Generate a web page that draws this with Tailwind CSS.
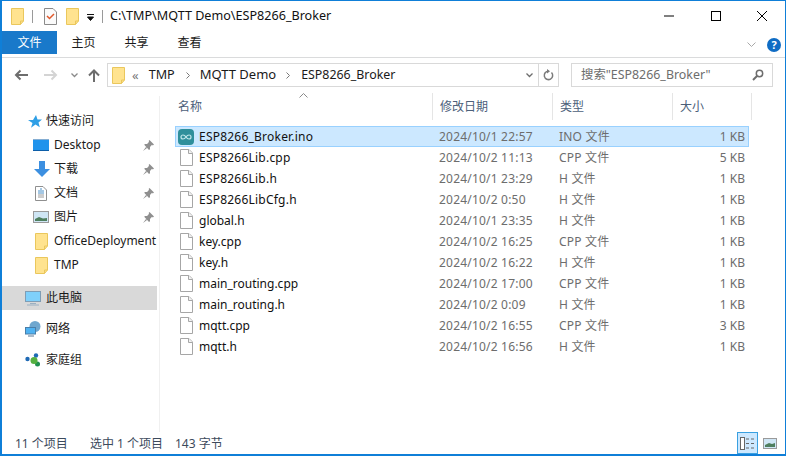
<!DOCTYPE html>
<html lang="en">
<head>
<meta charset="UTF-8">
<title>ESP8266_Broker</title>
<script src="https://cdn.jsdelivr.net/npm/@tailwindcss/browser@4"></script>
</head>
<body class="bg-white overflow-hidden">
<svg width="0" height="0" class="absolute">
  <symbol id="folder" viewBox="0 0 13 17"><path d="M.5.5h12v12.5l-3 3.5H.5z" fill="#ffe38f" stroke="#eac75c"/><path d="M9.5 16.5V13h3" fill="none" stroke="#eac75c"/></symbol>
  <symbol id="file" viewBox="0 0 13 17"><path d="M.5.5h8.5l3.5 3.5v12.5H.5z" fill="#fff" stroke="#a6a6a6"/><path d="M8.5.5v4h4" fill="#f2f2f2" stroke="#a6a6a6"/></symbol>
  <symbol id="pin" viewBox="0 0 11 11"><path d="M6.5 0 11 4.5 9.8 5.4 9 4.8 7 7 7 9.2 6 10 1.2 4.8 2 4l2.100 0 2-2.200L5.600 1zM3 7l-3 4 4-3z" fill="#8f8f8f"/></symbol>
</svg>
<div class="w-[786px] h-[456px] flex flex-col border border-[#0f7fd8] border-l-2 border-b-2 font-['Noto_Sans','Noto_Sans_CJK_SC',sans-serif] text-[12px] text-[#1a1a1a]">

  <!-- title bar -->
  <div class="h-[30px] shrink-0 flex items-center pl-[9px]">
    <svg width="13" height="17"><use href="#folder"/></svg>
    <div class="w-px h-[13px] bg-[#9a9a9a] ml-[8px]"></div>
    <svg width="13" height="17" viewBox="0 0 13 17" class="ml-[11px]"><path d="M.5.500h8.500l3.500 3.500v12.500H.5z" fill="#fafafa" stroke="#8a8a8a"/><path d="M3 8l2.500 2.500L10 6" fill="none" stroke="#e0572a" stroke-width="1.500"/></svg>
    <svg width="13" height="17" class="ml-[9px]"><use href="#folder"/></svg>
    <svg width="7" height="7" viewBox="0 0 7 7" class="ml-[8px] mt-[2px]"><path d="M0 .5h7M.5 3h6L3.500 6.500z" stroke="#111" stroke-width="1" fill="#111"/></svg>
    <div class="w-px h-[13px] bg-[#9a9a9a] ml-[8px]"></div>
    <span class="ml-[7px] text-[#111] text-[12.6px]">C:\TMP\MQTT Demo\ESP8266_Broker</span>
    <div class="ml-auto flex items-center">
      <svg width="10" height="2" class="mr-[37px]"><path d="M0 1h10" stroke="#000"/></svg>
      <svg width="10" height="10" class="mr-[36px]"><rect x=".5" y=".5" width="9" height="9" fill="none" stroke="#000"/></svg>
      <svg width="10" height="10" class="mr-[18px]"><path d="M0 0l10 10M10 0L0 10" stroke="#000" stroke-width="1"/></svg>
    </div>
  </div>

  <!-- ribbon tabs -->
  <div class="h-[27px] shrink-0 flex border-b border-[#dadbdc]">
    <div class="w-[55px] h-[23px] pt-[1px] bg-[#1979ca] text-white flex items-center justify-center">文件</div>
    <div class="w-[53px] h-[23px] pt-[1px] flex items-center justify-center">主页</div>
    <div class="w-[53px] h-[23px] pt-[1px] flex items-center justify-center">共享</div>
    <div class="w-[53px] h-[23px] pt-[1px] flex items-center justify-center">查看</div>
    <div class="ml-auto flex items-start pt-[7px] pr-[4px]">
      <svg width="9" height="5" viewBox="0 0 9 5" class="mt-[4px] mr-[11px]"><path d="M.5.500 4.500 4.500 8.500.500" fill="none" stroke="#a8a8a8"/></svg>
      <div class="w-[14px] h-[14px] rounded-full bg-[#0f6cc4] text-white text-[11px] leading-[14px] font-bold text-center">?</div>
    </div>
  </div>

  <!-- address row -->
  <div class="h-[38px] shrink-0 flex items-center pl-[12px] pb-[4px]">
    <svg width="14" height="12" viewBox="0 0 14 12"><path d="M14 6H2M6.500 1.500 2 6l4.500 4.500" fill="none" stroke="#6d6d6d" stroke-width="2"/></svg>
    <svg width="14" height="12" viewBox="0 0 14 12" class="ml-[16px]"><path d="M0 6h12M7.500 1.500 12 6l-4.500 4.500" fill="none" stroke="#d4d4d4" stroke-width="2"/></svg>
    <svg width="7" height="5" viewBox="0 0 7 5" class="ml-[13px]"><path d="M.5.500 3.500 3.500 6.500.500" fill="none" stroke="#8a8a8a" stroke-width="1.300"/></svg>
    <svg width="12" height="13" viewBox="0 0 12 13" class="ml-[10px]"><path d="M6 13V2M1 6.500 6 1.500l5 5" fill="none" stroke="#6d6d6d" stroke-width="2"/></svg>
    <div class="ml-[7px] w-[452px] h-[24px] border border-[#d9d9d9] flex items-center pl-[4px]">
      <svg width="13" height="17"><use href="#folder"/></svg>
      <span class="ml-[7px] text-[#777] text-[13px] leading-none">«</span>
      <span class="ml-[10px] text-[12.6px]">TMP</span>
      <svg width="4" height="7" viewBox="0 0 4 7" class="ml-[11px]"><path d="M.5.500 3.500 3.500.5 6.500" fill="none" stroke="#777"/></svg>
      <span class="ml-[10px] text-[13px]">MQTT Demo</span>
      <svg width="4" height="7" viewBox="0 0 4 7" class="ml-[10px]"><path d="M.5.500 3.500 3.500.5 6.500" fill="none" stroke="#777"/></svg>
      <span class="ml-[11px] text-[12.4px]">ESP8266_Broker</span>
      <div class="ml-auto w-[18px] h-full flex items-center justify-center">
        <svg width="7" height="5" viewBox="0 0 7 5"><path d="M.5.500 3.500 3.500 6.500.500" fill="none" stroke="#6d6d6d" stroke-width="1.300"/></svg>
      </div>
      <div class="w-[20px] h-full border-l border-[#d9d9d9] flex items-center justify-center">
        <svg width="11" height="12" viewBox="0 0 11 12"><path d="M8.500 3.500A4.200 4.200 0 1 1 5.500 2.200" fill="none" stroke="#7a7a7a" stroke-width="1.500"/><path d="M4 0v4.500l3-2.200z" fill="#7a7a7a"/></svg>
      </div>
    </div>
    <div class="ml-[12px] w-[202px] h-[24px] border border-[#d9d9d9] flex items-center pl-[9px] pr-[8px] text-[#6d6d6d]">
      <span class="text-[12.4px]">搜索"ESP8266_Broker"</span>
      <svg width="12" height="12" viewBox="0 0 12 12" class="ml-auto"><circle cx="7.500" cy="4.500" r="3.200" fill="none" stroke="#6d6d6d" stroke-width="1.500"/><path d="M5 7 1 11" stroke="#6d6d6d" stroke-width="2"/></svg>
    </div>
  </div>

  <!-- main area -->
  <div class="flex-1 flex min-h-0">
    <!-- nav pane -->
    <div class="w-[158px] shrink-0 border-r border-[#f0f0f0] pt-[13px]">
      <div class="h-[24px] flex items-center pl-[26px]">
        <svg width="14" height="13" viewBox="0 0 14 13"><path d="M8 0l1.500 4.500H14L10.500 7.500l1.300 4.800L7.500 9.500 3 12.800 4.500 8 0 5h5z" fill="#2f9fe6"/></svg>
        <span class="ml-[4px]">快速访问</span>
      </div>
      <div class="h-[24px] flex items-center pl-[31px] pr-[3px]">
        <svg width="17" height="13" viewBox="0 0 17 13"><rect width="16" height="11" y="1" fill="#1f93ec"/><path d="M0 11.500h16" stroke="#0d5ea8"/><path d="M0 0h16" stroke="#0d5ea8"/></svg>
        <span class="ml-[4px]">Desktop</span>
        <svg width="11" height="11" class="ml-auto mr-[2px]"><use href="#pin"/></svg>
      </div>
      <div class="h-[24px] flex items-center pl-[32px] pr-[3px]">
        <svg width="16" height="16" viewBox="0 0 16 16"><path d="M5 0h6v8h5l-8 8-8-8h5z" fill="#3c8fe0"/></svg>
        <span class="ml-[4px]">下载</span>
        <svg width="11" height="11" class="ml-auto mr-[2px]"><use href="#pin"/></svg>
      </div>
      <div class="h-[24px] flex items-center pl-[33px] pr-[3px]">
        <svg width="12" height="15" viewBox="0 0 12 15"><path d="M.5.500h7.500l3.500 3.500v10.500H.5z" fill="#fff" stroke="#8f8f8f"/><path d="M5 3h2M3 5h6M3 7h6" stroke="#4a90c8"/><path d="M3 9h6M3 11h6" stroke="#9a9a9a"/></svg>
        <span class="ml-[7px]">文档</span>
        <svg width="11" height="11" class="ml-auto mr-[2px]"><use href="#pin"/></svg>
      </div>
      <div class="h-[24px] flex items-center pl-[31px] pr-[3px]">
        <svg width="16" height="12" viewBox="0 0 16 12"><rect x=".5" y=".5" width="15" height="11" fill="#cfe6f5" stroke="#9a9a9a"/><path d="M2 8 6 6l4 1.500 4-.5v3H2z" fill="#4f7f5f"/></svg>
        <span class="ml-[5px]">图片</span>
        <svg width="11" height="11" class="ml-auto mr-[2px]"><use href="#pin"/></svg>
      </div>
      <div class="h-[24px] flex items-center pl-[33px] whitespace-nowrap overflow-hidden">
        <svg width="13" height="17" class="shrink-0"><use href="#folder"/></svg>
        <span class="ml-[6px]">OfficeDeployment</span>
      </div>
      <div class="h-[24px] flex items-center pl-[33px]">
        <svg width="13" height="17"><use href="#folder"/></svg>
        <span class="ml-[6px]">TMP</span>
      </div>
      <div class="h-[24px] flex items-center pl-[23px] mt-[9px] bg-[#d9d9d9] w-[155px]">
        <svg width="17" height="15" viewBox="0 0 17 15"><rect x=".5" y=".5" width="15" height="10" fill="#7fd0fb" stroke="#7f9db5"/><path d="M5 12.500h6M2 14h12" stroke="#9ab0c2"/></svg>
        <span class="ml-[4px]">此电脑</span>
      </div>
      <div class="h-[24px] flex items-center pl-[23px] mt-[7px]">
        <svg width="16" height="16" viewBox="0 0 16 16"><circle cx="10" cy="5.500" r="5.500" fill="#6fa7cf"/><rect x=".5" y="6.500" width="10" height="6.500" fill="#4fb2f2" stroke="#4a7ea8"/><path d="M3 15h6" stroke="#8fa5b8" stroke-width="1.500"/></svg>
        <span class="ml-[5px]">网络</span>
      </div>
      <div class="h-[24px] flex items-center pl-[23px] mt-[7px]">
        <svg width="16" height="14" viewBox="0 0 16 14"><circle cx="2.500" cy="6" r="2.200" fill="#1f6ab5"/><circle cx="11" cy="2.500" r="2.200" fill="#1f6ab5"/><circle cx="12.500" cy="11" r="2.500" fill="#1f8f4f"/><circle cx="9" cy="7.500" r="3.500" fill="#55b040"/></svg>
        <span class="ml-[5px]">家庭组</span>
      </div>
    </div>

    <!-- file list -->
    <div class="flex-1 flex flex-col min-w-0 pl-[15px]">
      <div class="h-[27px] -mt-[3px] flex shrink-0 text-[#4c607a] relative">
        <svg width="9" height="5" viewBox="0 0 9 5" class="absolute left-[124px] top-[0px]"><path d="M.5 4.500 4.500.500l4 4" fill="none" stroke="#8a8a8a"/></svg>
        <div class="w-[257px] pl-[3px] flex items-center">名称</div>
        <div class="w-[120px] pl-[7px] flex items-center border-l border-[#e5e5e5]">修改日期</div>
        <div class="w-[120px] pl-[7px] flex items-center border-l border-[#e5e5e5]">类型</div>
        <div class="w-[80px] pl-[7px] flex items-center border-x border-[#e5e5e5]">大小</div>
      </div>
      <div class="mt-[6px] w-[574px] text-[#6d6d6d]">
        <div class="h-[21px] flex items-center bg-[#cce8ff] border border-[#99d1ff]">
          <svg width="16" height="16" viewBox="0 0 16 16" class="ml-[2px] w-[16px]"><rect width="16" height="16" rx="4" fill="#2f8f9b"/><path d="M8 8c-1-1.500-2-2-3-2a2 2 0 0 0 0 4c1 0 2-.5 3-2s2-2 3-2a2 2 0 0 1 0 4c-1 0-2-.5-3-2" fill="none" stroke="#bfe6ea" stroke-width="1.200"/></svg>
          <span class="ml-[5px] w-[240px] text-[#111] tracking-[0.22px]">ESP8266_Broker.ino</span>
          <span class="w-[120px] tracking-[0.2px]">2024/10/1 22:57</span>
          <span class="w-[120px] tracking-[0.2px]">INO 文件</span>
          <span class="w-[66px] text-right">1 KB</span>
        </div>
        <div class="h-[21px] flex items-center border border-transparent">
          <svg width="13" height="17" class="ml-[4px] w-[13px]"><use href="#file"/></svg>
          <span class="ml-[6px] w-[240px] text-[#111] tracking-[0.22px]">ESP8266Lib.cpp</span>
          <span class="w-[120px] tracking-[0.2px]">2024/10/2 11:13</span>
          <span class="w-[120px] tracking-[0.2px]">CPP 文件</span>
          <span class="w-[66px] text-right">5 KB</span>
        </div>
        <div class="h-[21px] flex items-center border border-transparent">
          <svg width="13" height="17" class="ml-[4px] w-[13px]"><use href="#file"/></svg>
          <span class="ml-[6px] w-[240px] text-[#111] tracking-[0.22px]">ESP8266Lib.h</span>
          <span class="w-[120px] tracking-[0.2px]">2024/10/1 23:29</span>
          <span class="w-[120px] tracking-[0.2px]">H 文件</span>
          <span class="w-[66px] text-right">1 KB</span>
        </div>
        <div class="h-[21px] flex items-center border border-transparent">
          <svg width="13" height="17" class="ml-[4px] w-[13px]"><use href="#file"/></svg>
          <span class="ml-[6px] w-[240px] text-[#111] tracking-[0.22px]">ESP8266LibCfg.h</span>
          <span class="w-[120px] tracking-[0.2px]">2024/10/2 0:50</span>
          <span class="w-[120px] tracking-[0.2px]">H 文件</span>
          <span class="w-[66px] text-right">1 KB</span>
        </div>
        <div class="h-[21px] flex items-center border border-transparent">
          <svg width="13" height="17" class="ml-[4px] w-[13px]"><use href="#file"/></svg>
          <span class="ml-[6px] w-[240px] text-[#111]">global.h</span>
          <span class="w-[120px] tracking-[0.2px]">2024/10/1 23:35</span>
          <span class="w-[120px] tracking-[0.2px]">H 文件</span>
          <span class="w-[66px] text-right">1 KB</span>
        </div>
        <div class="h-[21px] flex items-center border border-transparent">
          <svg width="13" height="17" class="ml-[4px] w-[13px]"><use href="#file"/></svg>
          <span class="ml-[6px] w-[240px] text-[#111]">key.cpp</span>
          <span class="w-[120px] tracking-[0.2px]">2024/10/2 16:25</span>
          <span class="w-[120px] tracking-[0.2px]">CPP 文件</span>
          <span class="w-[66px] text-right">1 KB</span>
        </div>
        <div class="h-[21px] flex items-center border border-transparent">
          <svg width="13" height="17" class="ml-[4px] w-[13px]"><use href="#file"/></svg>
          <span class="ml-[6px] w-[240px] text-[#111]">key.h</span>
          <span class="w-[120px] tracking-[0.2px]">2024/10/2 16:22</span>
          <span class="w-[120px] tracking-[0.2px]">H 文件</span>
          <span class="w-[66px] text-right">1 KB</span>
        </div>
        <div class="h-[21px] flex items-center border border-transparent">
          <svg width="13" height="17" class="ml-[4px] w-[13px]"><use href="#file"/></svg>
          <span class="ml-[6px] w-[240px] text-[#111]">main_routing.cpp</span>
          <span class="w-[120px] tracking-[0.2px]">2024/10/2 17:00</span>
          <span class="w-[120px] tracking-[0.2px]">CPP 文件</span>
          <span class="w-[66px] text-right">1 KB</span>
        </div>
        <div class="h-[21px] flex items-center border border-transparent">
          <svg width="13" height="17" class="ml-[4px] w-[13px]"><use href="#file"/></svg>
          <span class="ml-[6px] w-[240px] text-[#111]">main_routing.h</span>
          <span class="w-[120px] tracking-[0.2px]">2024/10/2 0:09</span>
          <span class="w-[120px] tracking-[0.2px]">H 文件</span>
          <span class="w-[66px] text-right">1 KB</span>
        </div>
        <div class="h-[21px] flex items-center border border-transparent">
          <svg width="13" height="17" class="ml-[4px] w-[13px]"><use href="#file"/></svg>
          <span class="ml-[6px] w-[240px] text-[#111]">mqtt.cpp</span>
          <span class="w-[120px] tracking-[0.2px]">2024/10/2 16:55</span>
          <span class="w-[120px] tracking-[0.2px]">CPP 文件</span>
          <span class="w-[66px] text-right">3 KB</span>
        </div>
        <div class="h-[21px] flex items-center border border-transparent">
          <svg width="13" height="17" class="ml-[4px] w-[13px]"><use href="#file"/></svg>
          <span class="ml-[6px] w-[240px] text-[#111]">mqtt.h</span>
          <span class="w-[120px] tracking-[0.2px]">2024/10/2 16:56</span>
          <span class="w-[120px] tracking-[0.2px]">H 文件</span>
          <span class="w-[66px] text-right">1 KB</span>
        </div>
      </div>
    </div>
  </div>

  <!-- status bar -->
  <div class="h-[22px] shrink-0 flex items-center pl-[13px] text-[#3c4a5c]">
    <span class="w-[75px] mt-[2px]">11 个项目</span>
    <span class="w-[85px] mt-[2px]">选中 1 个项目</span>
    <span class="mt-[2px]">143 字节</span>
    <div class="ml-auto flex items-center pr-[8px]">
      <div class="w-[21px] h-[22px] bg-[#cce8ff] border border-[#3aa0e0] flex items-center justify-center">
        <svg width="15" height="13" viewBox="0 0 15 13"><rect x=".5" y=".5" width="4" height="12" fill="#fff" stroke="#666"/><path d="M6 2h3M11 2h3M6 6.500h3M11 6.500h3M6 11h3M11 11h3" stroke="#666"/></svg>
      </div>
      <svg width="14" height="11" viewBox="0 0 14 11" class="ml-[5px]"><rect x=".5" y=".5" width="13" height="10" fill="#cfe6f5" stroke="#9a9a9a"/><path d="M2 7l4-2 3 1 3-1v4H2z" fill="#4f7f5f"/></svg>
    </div>
  </div>
</div>
</body>
</html>
